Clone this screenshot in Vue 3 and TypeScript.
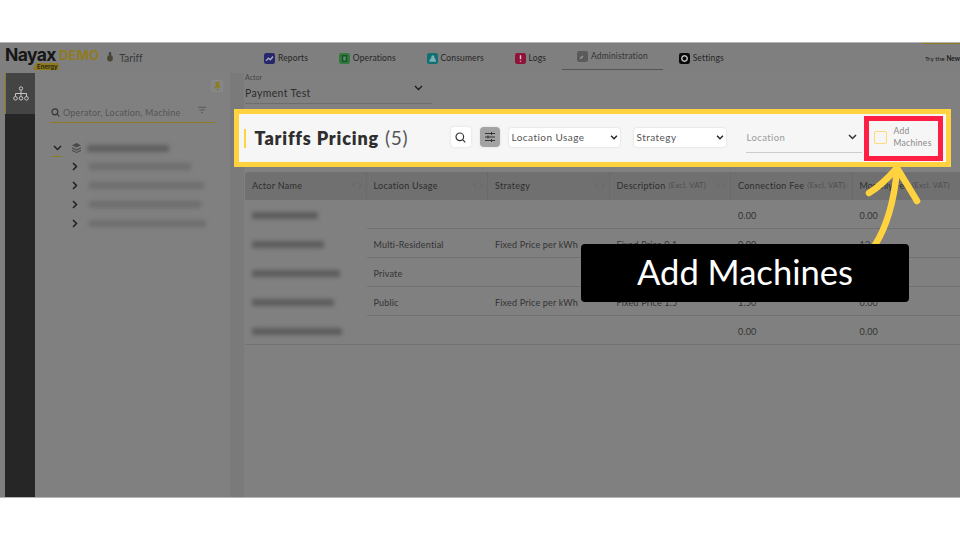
<script setup lang="ts">
// Tariffs Pricing walkthrough step: dimmed admin page, highlighted toolbar, caption + arrow
interface Row { width: number; usage: string; strategy: string; desc: string; fee: string; monthly: string }

const navItems = [
  { label: 'Reports', color: '#26276b', glyph: 'M2.500 10l3-3.500 2.500 2 3.500-4', fill: 'none', stroke: '#a9a9c4' },
  { label: 'Operations', color: '#2f7a3c', glyph: 'M4.500 3.500h5v7h-5z', fill: '#5c8f66', stroke: '#1d4f28' },
  { label: 'Consumers', color: '#0f6f73', glyph: 'M3 11c0-3 2-3.500 2.500-4.500C5.500 4 6 3 7.500 3S9.500 4.500 9.500 6.500C10 7.500 11.500 8 11.500 11z', fill: '#7fb0b0', stroke: 'none' },
  { label: 'Logs', color: '#8f1238', glyph: 'M7 3v5M7 9.800v1.400', fill: 'none', stroke: '#d9c4cb' },
  { label: 'Administration', color: '#5a5a5a', glyph: 'M4 10l3.500-3.500', fill: 'none', stroke: '#9a9a9a' },
  { label: 'Settings', color: '#0a0a0a', glyph: 'M7 3.500a3.500 3.500 0 1 0 .01 0z', fill: 'none', stroke: '#c4c4c4' },
]
const treeBars = [102, 115, 112, 117]
const columns = [
  { name: 'Actor Name', sort: true },
  { name: 'Location Usage', sort: true },
  { name: 'Strategy', sort: true },
  { name: 'Description', sub: '(Excl. VAT)', sort: true },
  { name: 'Connection Fee', sub: '(Excl. VAT)', sort: true },
  { name: 'Monthly Fee', sub: '(Excl. VAT)', sort: false },
]
const rows: Row[] = [
  { width: 66, usage: '', strategy: '', desc: '', fee: '0.00', monthly: '0.00' },
  { width: 72, usage: 'Multi-Residential', strategy: 'Fixed Price per kWh', desc: 'Fixed Price 0.1', fee: '0.00', monthly: '12' },
  { width: 88, usage: 'Private', strategy: '', desc: '', fee: '', monthly: '' },
  { width: 82, usage: 'Public', strategy: 'Fixed Price per kWh', desc: 'Fixed Price 1.5', fee: '1.50', monthly: '0.00' },
  { width: 90, usage: '', strategy: '', desc: '', fee: '0.00', monthly: '0.00' },
]
</script>

<template>
  <div class="slide">
    <div class="screen">
      <header class="topbar">
        <div class="brand">
          <div class="logo">
            <span class="nayax">Nayax</span>
            <span class="energy">Energy</span>
          </div>
          <span class="demo">DEMO</span>
          <svg class="bulb" width="6" height="10" viewBox="0 0 7 11"><rect x="2.2" y="0" width="2.6" height="3" fill="#3a3a3a" /><ellipse cx="3.5" cy="7" rx="3.3" ry="3.8" fill="#4a4636" /></svg>
          <span class="page-name">Tariff</span>
        </div>
        <nav class="nav">
          <div v-for="n in navItems" :key="n.label" class="nav-item" :class="{ active: n.label === 'Administration' }">
            <svg width="11" height="11" viewBox="0 0 14 14"><rect width="14" height="14" rx="3" :fill="n.color" /><path :d="n.glyph" :fill="n.fill" :stroke="n.stroke" stroke-width="1.800" /></svg>
            <span>{{ n.label }}</span>
          </div>
        </nav>
        <div class="try">Try the <b>New</b></div>
      </header>

      <div class="body">
        <aside class="rail">
          <div class="rail-item">
            <svg width="16" height="16" viewBox="0 0 16 16" fill="none" stroke="#c4c4c4" stroke-width="1">
              <circle cx="8" cy="2.5" r="1.7" /><path d="M8 4.2v3.3M2.5 10.5V7.5h11v3M8 7.5v3" />
              <circle cx="2.5" cy="12.3" r="1.8" /><circle cx="8" cy="12.3" r="1.8" /><circle cx="13.5" cy="12.3" r="1.8" />
            </svg>
          </div>
        </aside>

        <section class="tree">
          <div class="pin-row">
            <div class="pin">
              <svg width="7" height="9" viewBox="0 0 7 9"><path d="M1.3 0h4.4v1l-.6.6v2L7 5.400H4v3.600H3V5.400H0l1.900-1.800v-2l-.6-.6z" fill="#8f7a1f" /></svg>
            </div>
          </div>
          <div class="tree-search">
            <svg width="9" height="9" viewBox="0 0 10 10" fill="none" stroke="#333" stroke-width="1.300"><circle cx="4.300" cy="4.300" r="3.300" /><path d="M6.800 6.800L9.300 9.300" /></svg>
            <span class="ph">Operator, Location, Machine</span>
            <svg class="funnel" width="8" height="8" viewBox="0 0 9 8" fill="none" stroke="#555" stroke-width="1"><path d="M0 1h9M1.500 4h6M3.500 7h2" /></svg>
          </div>
          <div class="tree-root">
            <div class="open-toggle">
              <svg width="9" height="6" viewBox="0 0 9 6" fill="none" stroke="#1f1f1f" stroke-width="1.400"><path d="M1 1l3.500 3.500L8 1" /></svg>
            </div>
            <svg class="layers" width="9" height="10" viewBox="0 0 9 10" fill="#4a4a4a"><path d="M4.500 0L9 2.200 4.500 4.400 0 2.200zM0 4.200l4.500 2.200L9 4.200v1.300L4.500 7.700 0 5.500zM0 6.800L4.500 9 9 6.800V8L4.500 10 0 8z" /></svg>
            <div class="blur-bar" style="width: 82px"></div>
          </div>
          <div v-for="(w, i) in treeBars" :key="i" class="tree-child">
            <svg width="6" height="9" viewBox="0 0 6 9" fill="none" stroke="#1f1f1f" stroke-width="1.500"><path d="M1 1l3.500 3.500L1 8" /></svg>
            <div class="blur-bar soft" :style="{ width: w + 'px' }"></div>
          </div>
        </section>

        <main class="content">
          <div class="actor">
            <div class="actor-label">Actor</div>
            <div class="actor-value">
              <span>Payment Test</span>
              <svg width="9" height="6" viewBox="0 0 9 6" fill="none" stroke="#1d1d1d" stroke-width="1.400"><path d="M1 1l3.500 3.500L8 1" /></svg>
            </div>
          </div>

          <div class="toolbar">
            <div class="title-tick"></div>
            <h1 class="title">Tariffs Pricing <span>(5)</span></h1>
            <button class="icon-btn">
              <svg width="11" height="11" viewBox="0 0 11 11" fill="none" stroke="#333" stroke-width="1.200"><circle cx="4.800" cy="4.800" r="3.800" /><path d="M7.600 7.600l2.700 2.700" /></svg>
            </button>
            <button class="icon-btn on">
              <svg width="12" height="12" viewBox="0 0 12 12" fill="none" stroke="#333" stroke-width="1"><path d="M1 2.500h10M1 6h10M1 9.500h10" /><path d="M7.500 1v3M4 4.500v3M7.500 8v3" /></svg>
            </button>
            <div class="select loc">
              <span>Location Usage</span>
              <svg width="8" height="5" viewBox="0 0 9 6" fill="none" stroke="#222" stroke-width="1.700"><path d="M1 1l3.500 3.500L8 1" /></svg>
            </div>
            <div class="select strat">
              <span>Strategy</span>
              <svg width="8" height="5" viewBox="0 0 9 6" fill="none" stroke="#222" stroke-width="1.700"><path d="M1 1l3.500 3.500L8 1" /></svg>
            </div>
            <div class="location">
              <span>Location</span>
              <svg width="9" height="6" viewBox="0 0 9 6" fill="none" stroke="#333" stroke-width="1.500"><path d="M1 1l3.500 3.500L8 1" /></svg>
            </div>
            <div class="add-box">
              <div class="check"></div>
              <div class="add-label">Add<br />Machines</div>
            </div>
          </div>

          <div class="table">
            <div class="thead">
              <div v-for="c in columns" :key="c.name" class="th" :class="{ tight: !c.sort }">
                <span class="th-name">{{ c.name }}</span>
                <span v-if="c.sub" class="th-sub">{{ c.sub }}</span>
                <svg v-if="c.sort" class="sort" width="10" height="7" viewBox="0 0 10 7" fill="none" stroke="#676767" stroke-width=".9"><path d="M3.500 .8L.8 3.500l2.700 2.700M6.500 .8l2.700 2.700-2.700 2.700" /></svg>
              </div>
            </div>
            <div v-for="(r, i) in rows" :key="i" class="tr" :class="{ last: i === rows.length - 1 }">
              <div class="td first"><div class="blur-bar name" :style="{ width: r.width + 'px' }"></div></div>
              <div class="td">{{ r.usage }}</div>
              <div class="td">{{ r.strategy }}</div>
              <div class="td">{{ r.desc }}</div>
              <div class="td">{{ r.fee }}</div>
              <div class="td">{{ r.monthly }}</div>
            </div>
          </div>
        </main>
      </div>
      <div class="top-accent"></div>
    </div>

    <!-- annotation layer sits over the screenshot -->
    <svg class="arrow" width="70" height="90" viewBox="0 0 70 90" fill="none" stroke="#ffd23f" stroke-width="6.500" stroke-linecap="round" stroke-linejoin="round">
      <path d="M15 85C27 66 34 42 37 10" />
      <path d="M9 33C19 27 29 17 37 8C43 18 50 29 57 41" />
    </svg>
    <div class="caption">Add Machines</div>
  </div>
</template>

<style>
html, body { margin: 0; background: #fff; }
</style>

<style scoped>
.slide {
  position: relative; width: 960px; height: 540px; overflow: hidden; background: #fff;
  padding: 42px 0; box-sizing: border-box;
  font-family: "Lato", "Noto Sans", sans-serif; color: #333;
}
.screen {
  position: relative; width: 960px; height: 456px; background: #7f7f7f; display: flex; flex-direction: column;
  border-top: 1px solid #b4b4b4; border-bottom: 1px solid #b4b4b4; box-sizing: border-box; overflow: hidden;
}
.top-accent { position: absolute; right: 0; top: 0; width: 38px; height: 1px; background: #8f7a1f; }

.topbar { height: 30px; display: flex; align-items: center; flex: none; }
.brand { width: 264px; display: flex; align-items: center; flex: none; padding-left: 5px; box-sizing: border-box; }
.logo { position: relative; width: 54px; height: 28px; }
.nayax { font: 700 17.500px/14px "Inter", sans-serif; color: #161616; letter-spacing: -.6px; display: block; margin-top: 4px; }
.energy {
  position: absolute; left: 28px; top: 19px; background: #8f7a1f; color: #2a2a10;
  font: 700 6px/7px "Inter", sans-serif; padding: 0 1px 0 4px;
  clip-path: polygon(3px 0, 100% 0, 100% 100%, 0 100%);
}
.demo { font: 700 13px/16px "Inter", sans-serif; color: #8f7a1f; letter-spacing: .2px; margin-top: -6px; }
.bulb { margin-left: 8px; margin-top: -2px; }
.page-name { font-size: 10.500px; color: #3a3a3a; margin-left: 6px; letter-spacing: -.1px; }

.nav { display: flex; align-items: flex-start; height: 30px; gap: 30.800px; }
.nav-item {
  display: flex; align-items: center; gap: 3px; height: 30px; font-size: 8.500px; color: #262626;
  letter-spacing: .15px;
}
.nav-item.active {
  height: 27px; padding: 0 15px; margin: 0 -15px; border-bottom: 1px solid #555; box-sizing: border-box; color: #333;
}
.try { margin-left: auto; font-size: 6.500px; color: #1a1a1a; white-space: nowrap; width: 35px; overflow: hidden; }

.body { flex: 1; display: flex; min-height: 0; padding-left: 5px; }
.rail { width: 30px; background: #262626; flex: none; }
.rail-item { height: 41px; background: #444; display: flex; align-items: center; justify-content: center; border-left: 1px solid #8f7a1f; box-sizing: border-box; }

.tree { width: 195px; flex: none; background: #808080; box-sizing: border-box; padding: 7px 0 0 15px; }
.pin-row { display: flex; justify-content: flex-end; padding-right: 7px; }
.pin { width: 12px; height: 12px; background: #858585; border: 1px solid #8a8a8a; border-radius: 2px; display: flex; align-items: center; justify-content: center; box-sizing: border-box; }
.tree-search {
  width: 165px; height: 20px; margin-top: 11px; display: flex; align-items: center; gap: 3px;
  border-bottom: 1px solid #8f7a1f; box-sizing: border-box; padding: 0 1px;
}
.ph { font-size: 9px; color: #555; letter-spacing: .2px; white-space: nowrap; }
.funnel { margin-left: auto; margin-right: 8px; margin-top: -5px; }
.tree-root { display: flex; align-items: center; height: 18px; margin-top: 16px; }
.open-toggle { width: 10px; height: 18px; display: flex; align-items: center; justify-content: center; border-bottom: 1px solid #8f7a1f; margin-left: 2px; box-sizing: border-box; }
.layers { margin-left: 10px; margin-right: 6px; }
.tree-child { display: flex; align-items: center; height: 19px; padding-left: 22px; gap: 11px; }
.blur-bar { height: 7px; background: #5f5f5f; filter: blur(2px); border-radius: 2px; }
.blur-bar.soft { background: #6e6e6e; }
.blur-bar.name { background: #5c5c5c; }

.content {
  flex: 1; min-width: 0; display: flex; flex-direction: column; padding-left: 4px;
  background: linear-gradient(90deg, #7a7a7a 14px, #808080 14px);
}
.actor { width: 187px; height: 31px; margin-left: 11px; border-bottom: 1px solid #6d6d6d; box-sizing: border-box; flex: none; position: relative; }
.actor-label { font-size: 7px; line-height: 8px; color: #444; }
.actor-value { font-size: 10.500px; line-height: 14px; margin-top: 5px; color: #2d2d2d; letter-spacing: .35px; }
.actor-value svg { position: absolute; right: 9px; top: 12px; }

.toolbar {
  width: 717px; height: 58px; box-sizing: border-box; margin-top: 5px; flex: none;
  background: #f6f6f6; border: 5px solid #ffd23f; display: flex; align-items: center; padding: 0 0 2px 5px;
}
.title-tick { width: 1.500px; height: 19px; background: #ffd23f; margin-top: 2px; }
.title { margin: 2px 0 0 9px; width: 196px; font: 800 18px/22px "Lato", sans-serif; color: #2e2e2e; letter-spacing: .85px; white-space: nowrap; flex: none; }
.title span { font-weight: 400; font-size: 19px; color: #555; margin-left: 1px; letter-spacing: .6px; }
.icon-btn { width: 20px; height: 20px; padding: 0; border: 0; border-radius: 4px; background: #fff; display: flex; align-items: center; justify-content: center; box-shadow: 0 0 3px #ddd; flex: none; margin-right: 9px; }
.icon-btn.on { background: #a3a3a3; }
.select {
  height: 19px; background: #fff; border-radius: 3px; box-shadow: 0 0 2px #ccc; flex: none; box-sizing: border-box;
  display: flex; align-items: center; justify-content: space-between; padding: 0 2px 0 3px; font-size: 10px; color: #555; letter-spacing: .45px;
}
.select.loc { width: 111px; margin-right: 14px; }
.select.strat { width: 92px; margin-right: 20px; }
.location {
  width: 116px; height: 28px; box-sizing: border-box; margin-top: 4px; border-bottom: 1px solid #ccc; flex: none;
  display: flex; align-items: center; justify-content: space-between; padding: 0 5px 3px 1px; font-size: 9.500px; color: #9a9a9a; letter-spacing: .4px;
}
.add-box {
  width: 79px; height: 45px; box-sizing: border-box; border: 5px solid #ff1f45; flex: none; margin: 2px 0 0 2px;
  display: flex; align-items: center; padding: 0 0 2px 5px; gap: 7px;
}
.check { width: 11px; height: 11px; border: 1px solid #ffd97a; border-radius: 2px; flex: none; }
.add-label { font-size: 8.500px; line-height: 12px; color: #888; letter-spacing: .3px; margin-top: -1px; }

.table { margin: 5px 0 0 11px; width: 715px; overflow: hidden; }
.thead { height: 28px; background: #707070; display: grid; grid-template-columns: repeat(6, 121.500px); border-radius: 3px 0 0 0; }
.th { display: flex; align-items: center; padding: 0 0 1px 7px; font-size: 9px; color: #2e2e2e; position: relative; letter-spacing: .3px; gap: 3px; white-space: nowrap; border-right: 1px solid #6a6a6a; box-sizing: border-box; }
.th.tight { letter-spacing: 0; }
.th-sub { font-size: 7.500px; color: #4d4d4d; letter-spacing: .3px; }
.sort { position: absolute; right: 4px; top: 10px; }
.tr { display: grid; grid-template-columns: repeat(6, 121.500px); height: 29px; }
.td { display: flex; align-items: center; padding: 2px 0 0 7px; font-size: 9px; color: #333; letter-spacing: .18px; border-bottom: 1px solid #717171; box-sizing: border-box; white-space: nowrap; }
.td.first { border-bottom-color: transparent; }
.tr.last .td.first { border-bottom-color: #717171; }

.arrow { position: absolute; left: 860px; top: 160px; }
.caption {
  position: absolute; left: 581px; top: 244px; width: 328px; height: 58px; border-radius: 4px; background: #000;
  color: #fff; font-size: 34.600px; display: flex; align-items: center; justify-content: center; padding-bottom: 3px; box-sizing: border-box;
}
</style>
